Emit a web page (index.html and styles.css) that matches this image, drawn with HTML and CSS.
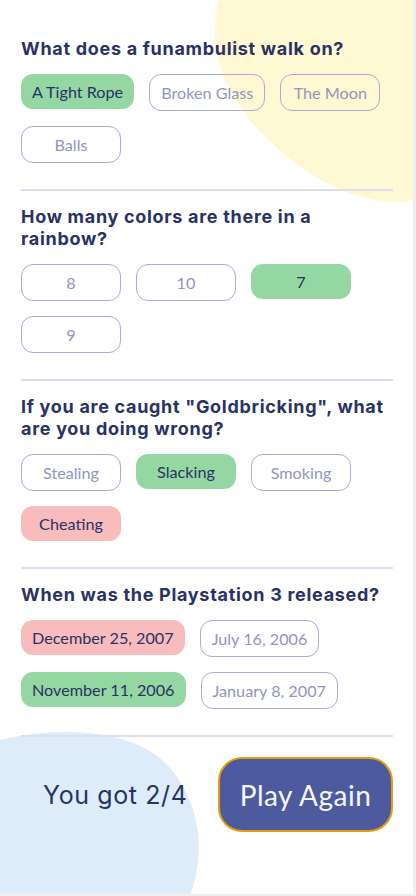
FILE: index.html
```html
<!DOCTYPE html>
<html lang="en">
<head>
<meta charset="utf-8">
<title>Quizzical</title>
<link rel="stylesheet" href="styles.css">
</head>
<body>
<div class="page">
  <svg class="blob blob-yellow" width="200" height="205" viewBox="0 0 200 205" aria-hidden="true">
    <path d="M6 0 C -10 60, 20 120, 95 172 C 135 198, 175 206, 200 200 L 200 0 Z" fill="#fff8d2"/>
  </svg>
  <svg class="blob blob-blue" width="205" height="166" viewBox="0 0 205 166" aria-hidden="true">
    <path d="M0 10 C 60 -4, 135 -2, 170 38 C 205 80, 203 130, 190 166 L 0 166 Z" fill="#deebf8"/>
  </svg>
  <main class="quiz">
    <section class="question">
      <h2 class="q-title">What does a funambulist walk on?</h2>
      <div class="answers">
        <button class="ans correct">A Tight Rope</button>
        <button class="ans">Broken Glass</button>
        <button class="ans">The Moon</button>
        <button class="ans">Balls</button>
      </div>
    </section>
    <section class="question">
      <h2 class="q-title">How many colors are there in a rainbow?</h2>
      <div class="answers">
        <button class="ans">8</button>
        <button class="ans">10</button>
        <button class="ans correct">7</button>
        <button class="ans">9</button>
      </div>
    </section>
    <section class="question">
      <h2 class="q-title">If you are caught "Goldbricking", what are you doing wrong?</h2>
      <div class="answers">
        <button class="ans">Stealing</button>
        <button class="ans correct">Slacking</button>
        <button class="ans">Smoking</button>
        <button class="ans wrong">Cheating</button>
      </div>
    </section>
    <section class="question">
      <h2 class="q-title">When was the Playstation 3 released?</h2>
      <div class="answers">
        <button class="ans wrong">December 25, 2007</button>
        <button class="ans">July 16, 2006</button>
        <button class="ans correct">November 11, 2006</button>
        <button class="ans">January 8, 2007</button>
      </div>
    </section>
    <div class="result">
      <p class="score">You got 2/4</p>
      <button class="play">Play Again</button>
    </div>
  </main>
</div>
</body>
</html>
```
FILE: styles.css
```css
html {
  background: #efefef;
}
body {
  margin: 0;
}
.page {
  position: relative;
  width: 413px;
  height: 894px;
  background: #ffffff;
  overflow: hidden;
}
.blob {
  position: absolute;
  display: block;
}
.blob-yellow {
  top: 0;
  right: 0;
}
.blob-blue {
  left: 0;
  bottom: -2px;
}
.quiz {
  position: relative;
  padding: 38px 20px 0 21px;
}
.question {
  border-bottom: 2px solid #dbdef0;
  padding-bottom: 26px;
  margin-bottom: 15px;
}
.q-title {
  margin: 0 0 14px;
  font-family: Inter, "Noto Sans", sans-serif;
  font-weight: 700;
  font-size: 18px;
  line-height: 22px;
  color: #293264;
  letter-spacing: 0.7px;
}
.answers {
  display: flex;
  flex-wrap: wrap;
  align-items: flex-start;
  gap: 15px 15px;
}
.ans {
  box-sizing: content-box;
  min-width: 76px;
  height: 35px;
  padding: 0 11px;
  border: 1px solid #a8add3;
  border-radius: 12px;
  background: transparent;
  font-family: Lato, "Open Sans", sans-serif;
  font-size: 16.2px;
  color: #9196bd;
}
.ans.correct {
  border: 0;
  min-width: 78px;
  background: #94d7a2;
  color: #293264;
}
.ans.wrong {
  border: 0;
  min-width: 78px;
  background: #f8bcbc;
  color: #293264;
}
.result {
  display: flex;
  align-items: center;
  padding-top: 5px;
}
.score {
  margin: 0 0 0 22px;
  font-family: Inter, "Noto Sans", sans-serif;
  font-size: 25px;
  letter-spacing: 0.6px;
  color: #293264;
}
.play {
  margin-left: auto;
  width: 175px;
  height: 75px;
  border: 2px solid #e49e0c;
  border-radius: 24px;
  background: #4d5b9e;
  color: #f5f7fb;
  font-family: Lato, "Open Sans", sans-serif;
  font-size: 28px;
  letter-spacing: 0.5px;
}
```
